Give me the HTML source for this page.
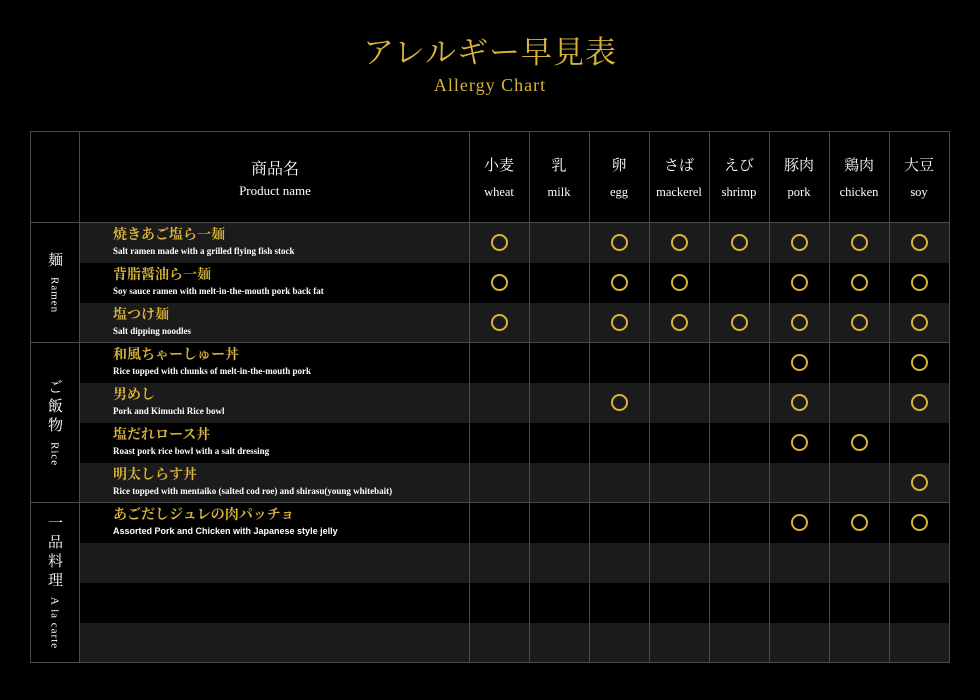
<!DOCTYPE html>
<html><head><meta charset="utf-8"><style>
*{margin:0;padding:0;box-sizing:border-box}
body{width:980px;height:700px;background:#000;position:relative;overflow:hidden;font-family:"Liberation Serif","Noto Serif CJK SC",serif;color:#fff}
.a{position:absolute}
.t1{left:0;width:980px;top:35px;text-align:center;font-size:31px;color:#d9b43c;letter-spacing:1px;line-height:36px}
.t2{left:0;width:980px;top:75px;text-align:center;font-size:18px;color:#d9b43c;letter-spacing:1px}
.vl{width:1px;background:#4a4a4a;top:131px;height:532px}
.hl{height:1px;background:#4a4a4a;left:30px;width:920px}
.dk{background:#1b1b1b;left:80px;width:869px;height:40px}
.hj{font-size:15px;text-align:center;top:154px;width:60px}
.he{font-size:12.5px;text-align:center;top:185px;width:60px}
.c{width:17px;height:17px;border:2px solid #d9b43c;border-radius:50%}
.jn{left:113px;font-size:14px;font-weight:bold;color:#d9b43c;line-height:16px}
.en{left:113px;font-size:9px;font-weight:bold;line-height:10px}
.cat{left:30px;width:49px;writing-mode:vertical-rl;font-size:15px;display:flex;align-items:center;justify-content:center;letter-spacing:4px}
.cat span{font-size:11px;letter-spacing:1px;margin-top:6px}
</style></head><body>
<div class="a t1">アレルギー早見表</div>
<div class="a t2">Allergy Chart</div>

<div class="a dk" style="top:223px"></div>
<div class="a dk" style="top:303px"></div>
<div class="a dk" style="top:383px"></div>
<div class="a dk" style="top:463px"></div>
<div class="a dk" style="top:543px"></div>
<div class="a dk" style="top:623px"></div>

<div class="a hl" style="top:131px"></div>
<div class="a hl" style="top:222px"></div>
<div class="a hl" style="top:342px"></div>
<div class="a hl" style="top:502px"></div>
<div class="a hl" style="top:662px"></div>
<div class="a vl" style="left:30px"></div>
<div class="a vl" style="left:79px"></div>
<div class="a vl" style="left:469px"></div>
<div class="a vl" style="left:529px"></div>
<div class="a vl" style="left:589px"></div>
<div class="a vl" style="left:649px"></div>
<div class="a vl" style="left:709px"></div>
<div class="a vl" style="left:769px"></div>
<div class="a vl" style="left:829px"></div>
<div class="a vl" style="left:889px"></div>
<div class="a vl" style="left:949px"></div>

<div class="a" style="left:80px;width:390px;top:156px;text-align:center;font-size:16px">商品名</div>
<div class="a" style="left:80px;width:390px;top:183px;text-align:center;font-size:13px">Product name</div>

<div class="a hj" style="left:469px">小麦</div><div class="a he" style="left:469px">wheat</div>
<div class="a hj" style="left:529px">乳</div><div class="a he" style="left:529px">milk</div>
<div class="a hj" style="left:589px">卵</div><div class="a he" style="left:589px">egg</div>
<div class="a hj" style="left:649px">さば</div><div class="a he" style="left:649px">mackerel</div>
<div class="a hj" style="left:709px">えび</div><div class="a he" style="left:709px">shrimp</div>
<div class="a hj" style="left:769px">豚肉</div><div class="a he" style="left:769px">pork</div>
<div class="a hj" style="left:829px">鶏肉</div><div class="a he" style="left:829px">chicken</div>
<div class="a hj" style="left:889px">大豆</div><div class="a he" style="left:889px">soy</div>

<div class="a cat" style="top:223px;height:119px">麺<span>Ramen</span></div>
<div class="a cat" style="top:343px;height:159px">ご飯物<span>Rice</span></div>
<div class="a cat" style="top:503px;height:159px">一品料理<span>A la carte</span></div>

<div class="a jn" style="top:228px">焼きあご塩ら一麺</div><div class="a en" style="top:246px">Salt ramen made with a grilled flying fish stock</div>
<div class="a jn" style="top:268px">背脂醤油ら一麺</div><div class="a en" style="top:286px">Soy sauce ramen with melt-in-the-mouth pork back fat</div>
<div class="a jn" style="top:308px">塩つけ麺</div><div class="a en" style="top:326px">Salt dipping noodles</div>
<div class="a jn" style="top:348px">和風ちゃーしゅー丼</div><div class="a en" style="top:366px">Rice topped with chunks of melt-in-the-mouth pork</div>
<div class="a jn" style="top:388px">男めし</div><div class="a en" style="top:406px">Pork and Kimuchi Rice bowl</div>
<div class="a jn" style="top:428px">塩だれロース丼</div><div class="a en" style="top:446px">Roast pork rice bowl with a salt dressing</div>
<div class="a jn" style="top:468px">明太しらす丼</div><div class="a en" style="top:486px">Rice topped with mentaiko (salted cod roe) and shirasu(young whitebait)</div>
<div class="a jn" style="top:508px">あごだしジュレの肉パッチョ</div><div class="a en" style="top:526px;font-family:'Liberation Sans',sans-serif">Assorted Pork and Chicken with Japanese style jelly</div>

<div id="cs"></div>
<script>
var rows=[[0,2,3,4,5,6,7],[0,2,3,5,6,7],[0,2,3,4,5,6,7],[5,7],[2,5,7],[5,6],[7],[5,6,7]];
var h='';
rows.forEach(function(r,i){r.forEach(function(c){h+='<div class="a c" style="left:'+(491+c*60)+'px;top:'+(234+i*40)+'px"></div>';});});
document.getElementById('cs').innerHTML=h;
</script>
</body></html>
